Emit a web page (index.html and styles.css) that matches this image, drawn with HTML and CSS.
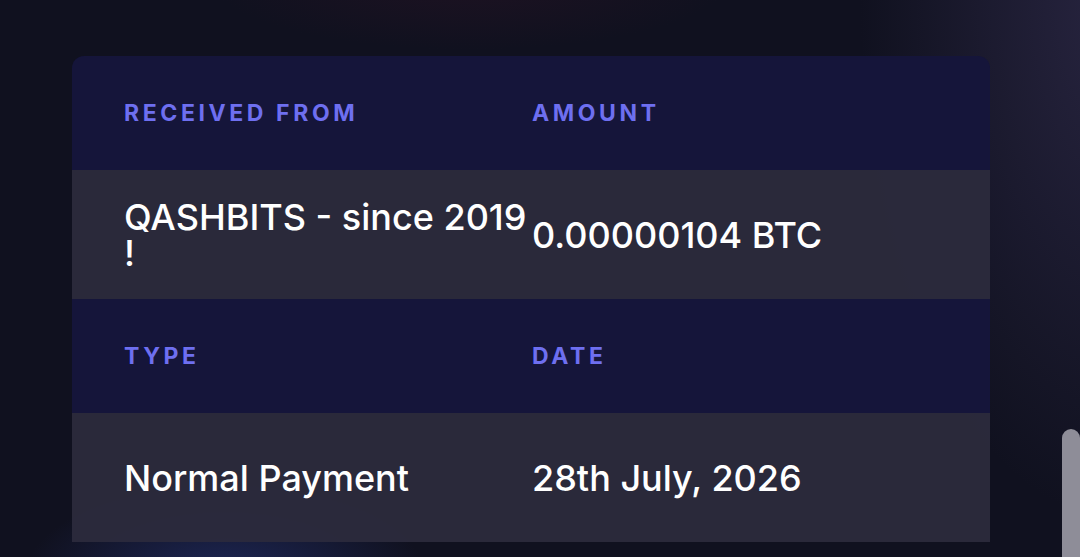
FILE: index.html
```html
<!DOCTYPE html>
<html lang="en">
<head>
<meta charset="utf-8">
<title>Transaction</title>
<link rel="stylesheet" href="styles.css">
</head>
<body>
<main class="page">
  <section class="card">
    <div class="row head">
      <div class="cell">Received From</div>
      <div class="cell">Amount</div>
    </div>
    <div class="row data">
      <div class="cell">QASHBITS - since 2019 !</div>
      <div class="cell">0.00000104 BTC</div>
    </div>
    <div class="row head">
      <div class="cell">Type</div>
      <div class="cell">Date</div>
    </div>
    <div class="row data">
      <div class="cell">Normal Payment</div>
      <div class="cell">28th July, 2026</div>
    </div>
  </section>
</main>
<div class="scroll-thumb"></div>
</body>
</html>
```

FILE: styles.css
```css
html, body {
  margin: 0;
  height: 100%;
  overflow: hidden;
}

body {
  font-family: Inter, "Noto Sans", "Liberation Sans", sans-serif;
  background:
    radial-gradient(ellipse 200px 90px at 225px 575px, rgba(40, 56, 130, 0.55), rgba(40, 56, 130, 0) 100%),
    radial-gradient(ellipse 260px 70px at 470px -20px, rgba(60, 20, 40, 0.3), rgba(60, 20, 40, 0) 100%),
    radial-gradient(ellipse 260px 520px at 1120px 0px, rgba(44, 40, 70, 0.85), rgba(44, 40, 70, 0) 100%),
    #10111f;
  color: #ffffff;
}

.page {
  padding: 56px 0 0 72px;
}

.card {
  width: 918px;
  border-radius: 12px 12px 0 0;
  overflow: hidden;
}

.row {
  display: grid;
  grid-template-columns: 408px 1fr;
  align-items: center;
  padding: 0 52px;
}

.head {
  height: 114px;
  background: #15153a;
}

.data {
  height: 129px;
  background: rgba(44, 43, 61, 0.94);
}

.head .cell {
  font-size: 23px;
  font-weight: 700;
  letter-spacing: 3.6px;
  text-transform: uppercase;
  color: #6e6ff0;
}

.data .cell {
  font-size: 36px;
  font-weight: 500;
  line-height: 1;
  color: #ffffff;
}

.scroll-thumb {
  position: fixed;
  left: 1062px;
  top: 429px;
  width: 18px;
  height: 160px;
  border-radius: 9px;
  background: #8e8d98;
}
```
